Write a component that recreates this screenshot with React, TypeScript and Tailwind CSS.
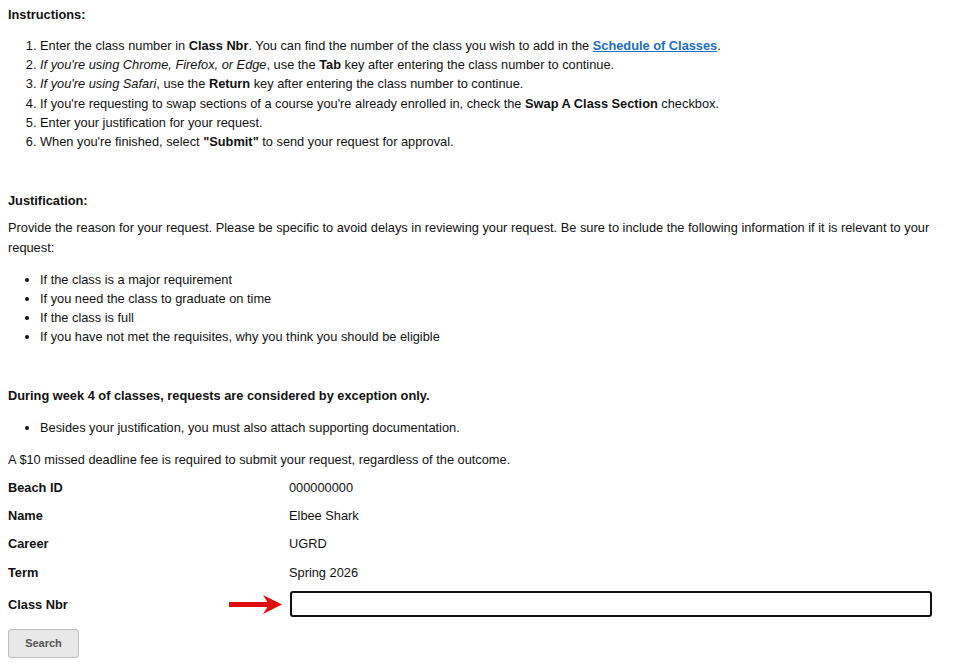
import { useState } from "react";

const rows = [
  { label: "Beach ID", value: "000000000" },
  { label: "Name", value: "Elbee Shark" },
  { label: "Career", value: "UGRD" },
  { label: "Term", value: "Spring 2026" },
];

const App = () => {
  const [classNbr, setClassNbr] = useState("");

  return (
    <div className="bg-white min-h-screen px-[8px] text-[12.8px] leading-[19px] text-[#111] font-['Liberation_Sans',Arial,sans-serif]">
      <div className="pt-[5px] font-bold">Instructions:</div>

      <ol className="mt-[12px] pl-[32px] list-decimal leading-[19.2px]">
        <li>
          Enter the class number in <b>Class Nbr</b>. You can find the number of the class you wish to add in the{" "}
          <a href="#" className="text-[#1b6ec2] font-bold underline">Schedule of Classes</a>.
        </li>
        <li>
          <i>If you're using Chrome, Firefox, or Edge</i>, use the <b>Tab</b> key after entering the class number to continue.
        </li>
        <li>
          <i>If you're using Safari</i>, use the <b>Return</b> key after entering the class number to continue.
        </li>
        <li>
          If you're requesting to swap sections of a course you're already enrolled in, check the <b>Swap A Class Section</b> checkbox.
        </li>
        <li>Enter your justification for your request.</li>
        <li>
          When you're finished, select <b>"Submit"</b> to send your request for approval.
        </li>
      </ol>

      <div className="mt-[40px] font-bold">Justification:</div>
      <p className="mt-[8px] leading-[19.5px]">
        Provide the reason for your request. Please be specific to avoid delays in reviewing your request. Be sure to include the following information if it is relevant to your request:
      </p>
      <ul className="mt-[13px] pl-[32px] list-disc">
        <li>If the class is a major requirement</li>
        <li>If you need the class to graduate on time</li>
        <li>If the class is full</li>
        <li>If you have not met the requisites, why you think you should be eligible</li>
      </ul>

      <div className="mt-[40px] font-bold">During week 4 of classes, requests are considered by exception only.</div>
      <ul className="mt-[13px] pl-[32px] list-disc">
        <li>Besides your justification, you must also attach supporting documentation.</li>
      </ul>
      <p className="mt-[13px]">A $10 missed deadline fee is required to submit your request, regardless of the outcome.</p>

      <div className="mt-[4px]">
        {rows.map(r => (
          <div key={r.label} className="flex items-center h-[28.3px]">
            <div className="w-[281px] font-bold">{r.label}</div>
            <div>{r.value}</div>
          </div>
        ))}
        <div className="flex items-center mt-[5px] h-[26px]">
          <div className="w-[221px] font-bold">Class Nbr</div>
          <svg width="54" height="22" viewBox="0 0 54 22" className="mr-[7px]">
            <rect x="0" y="9" width="40" height="5" fill="#e00d0d" />
            <path d="M34 2 L53 11.5 L34 21 L40 11.5 Z" fill="#e00d0d" />
          </svg>
          <input
            value={classNbr}
            onChange={e => setClassNbr(e.target.value)}
            autoFocus
            className="w-[642px] h-[26px] border-2 border-[#111] rounded-[3px] px-[6px] outline-none"
          />
        </div>
      </div>

      <button className="mt-[12px] w-[71px] h-[29px] bg-[#e8e8e8] border border-[#bdbdbd] rounded-[3px] text-[11px] font-bold text-[#555] font-['Liberation_Sans',Arial,sans-serif]">
        Search
      </button>
    </div>
  );
};

export default App;
